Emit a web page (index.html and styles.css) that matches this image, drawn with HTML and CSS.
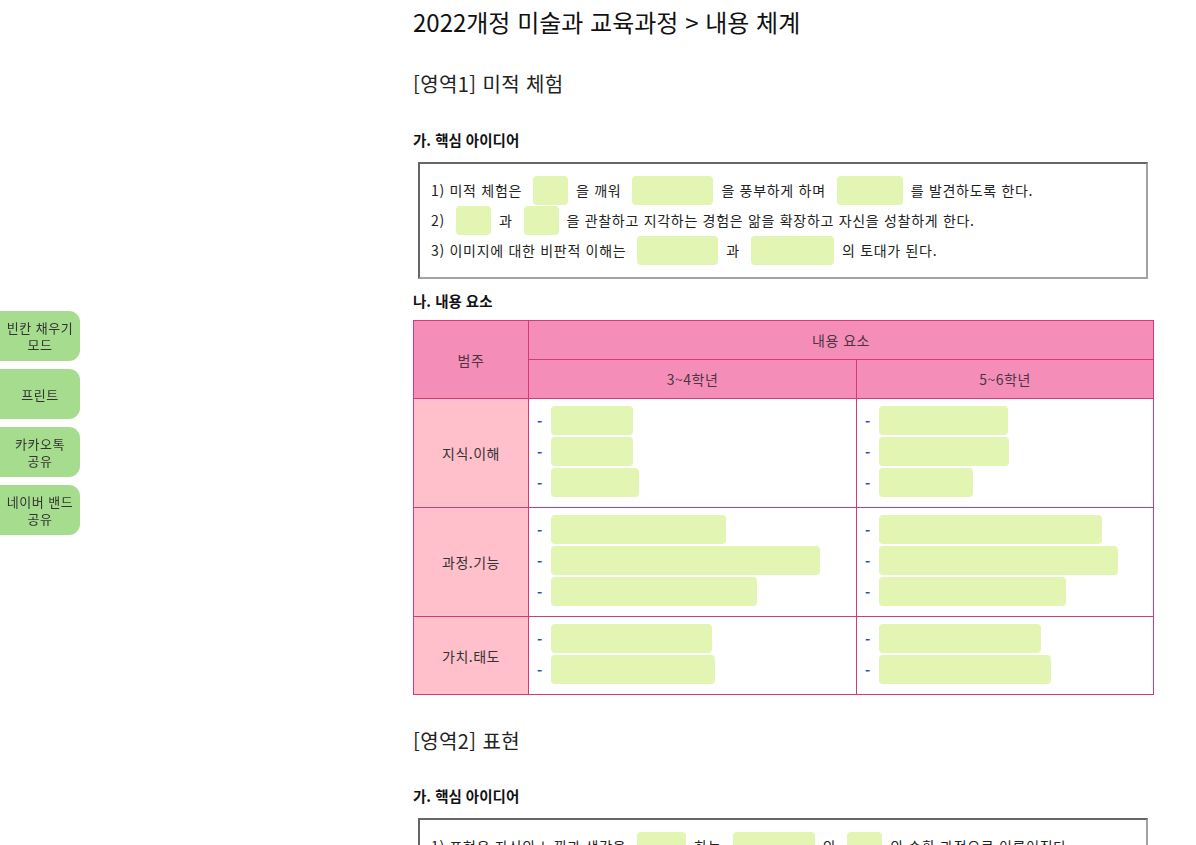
FILE: index.html
```html
<!DOCTYPE html>
<html lang="ko">
<head>
<meta charset="utf-8">
<title>2022개정 미술과 교육과정 > 내용 체계</title>
<link rel="stylesheet" href="styles.css">
</head>
<body>
<nav class="side">
  <button class="side-btn">빈칸 채우기<br>모드</button>
  <button class="side-btn">프린트</button>
  <button class="side-btn">카카오톡<br>공유</button>
  <button class="side-btn">네이버 밴드<br>공유</button>
</nav>
<main class="main">
  <h1 class="title">2022개정 미술과 교육과정 &gt; 내용 체계</h1>

  <h2 class="area">[영역1] 미적 체험</h2>
  <h3 class="sub">가. 핵심 아이디어</h3>
  <div class="idea">
    <div class="line">1) 미적 체험은<span class="blank w35"></span>을 깨워<span class="blank w81"></span>을 풍부하게 하며<span class="blank w66"></span>를 발견하도록 한다.</div>
    <div class="line">2)<span class="blank w35"></span>과<span class="blank w35"></span>을 관찰하고 지각하는 경험은 앎을 확장하고 자신을 성찰하게 한다.</div>
    <div class="line">3) 이미지에 대한 비판적 이해는<span class="blank w81"></span>과<span class="blank w83"></span>의 토대가 된다.</div>
  </div>

  <h3 class="sub sub2">나. 내용 요소</h3>
  <table class="tbl">
    <colgroup><col class="c1"><col class="c2"><col class="c3"></colgroup>
    <thead>
      <tr><th rowspan="2">범주</th><th colspan="2">내용 요소</th></tr>
      <tr><th>3~4학년</th><th>5~6학년</th></tr>
    </thead>
    <tbody>
      <tr>
        <td class="cat">지식.이해</td>
        <td class="cell">
          <div class="item"><span class="dash">-</span><span class="blank" style="width:82px"></span></div>
          <div class="item"><span class="dash">-</span><span class="blank" style="width:82px"></span></div>
          <div class="item"><span class="dash">-</span><span class="blank" style="width:88px"></span></div>
        </td>
        <td class="cell">
          <div class="item"><span class="dash">-</span><span class="blank" style="width:129px"></span></div>
          <div class="item"><span class="dash">-</span><span class="blank" style="width:130px"></span></div>
          <div class="item"><span class="dash">-</span><span class="blank" style="width:94px"></span></div>
        </td>
      </tr>
      <tr>
        <td class="cat">과정.기능</td>
        <td class="cell">
          <div class="item"><span class="dash">-</span><span class="blank" style="width:175px"></span></div>
          <div class="item"><span class="dash">-</span><span class="blank" style="width:269px"></span></div>
          <div class="item"><span class="dash">-</span><span class="blank" style="width:206px"></span></div>
        </td>
        <td class="cell">
          <div class="item"><span class="dash">-</span><span class="blank" style="width:223px"></span></div>
          <div class="item"><span class="dash">-</span><span class="blank" style="width:239px"></span></div>
          <div class="item"><span class="dash">-</span><span class="blank" style="width:187px"></span></div>
        </td>
      </tr>
      <tr>
        <td class="cat">가치.태도</td>
        <td class="cell">
          <div class="item"><span class="dash">-</span><span class="blank" style="width:161px"></span></div>
          <div class="item"><span class="dash">-</span><span class="blank" style="width:164px"></span></div>
        </td>
        <td class="cell">
          <div class="item"><span class="dash">-</span><span class="blank" style="width:162px"></span></div>
          <div class="item"><span class="dash">-</span><span class="blank" style="width:172px"></span></div>
        </td>
      </tr>
    </tbody>
  </table>

  <h2 class="area area2">[영역2] 표현</h2>
  <h3 class="sub sub3">가. 핵심 아이디어</h3>
  <div class="idea">
    <div class="line">1) 표현은 자신의 느낌과 생각을<span class="blank w49"></span>하는<span class="blank w82"></span>의<span class="blank w35"></span>의 순환 과정으로 이루어진다.</div>
    <div class="line">2) 표현은<span class="blank w81"></span>을 바탕으로<span class="blank w81"></span>과 소통하는 과정이다.</div>
    <div class="line">3)<span class="blank w66"></span>에 대한 탐색은 표현의 가능성을 확장한다.</div>
  </div>
</main>
</body>
</html>
```

FILE: styles.css
```css
html, body {
  margin: 0;
  padding: 0;
  background: #fff;
}
body {
  font-family: "Noto Sans CJK KR", "Noto Sans", "Liberation Sans", sans-serif;
  color: #222;
  font-size: 14px;
}
.side {
  position: fixed;
  left: 0;
  top: 311px;
  display: flex;
  flex-direction: column;
  gap: 8px;
}
.side-btn {
  width: 80px;
  height: 50px;
  border: 0;
  margin: 0;
  padding: 0 2px;
  background: #a6dc8e;
  border-radius: 0 11px 11px 0;
  font-family: inherit;
  font-size: 13px;
  letter-spacing: 0.5px;
  line-height: 17px;
  color: #333;
  text-align: center;
}
.main {
  margin-left: 413px;
  width: 740px;
}
.title {
  margin: 7px 0 0;
  font-size: 24px;
  line-height: 30px;
  font-weight: 400;
  color: #111;
}
.area {
  margin: 33px 0 0;
  font-size: 20px;
  letter-spacing: 0.4px;
  line-height: 28px;
  font-weight: 400;
  color: #222;
}
.area2 { margin-top: 32px; }
.sub {
  margin: 32px 0 0;
  font-size: 14.5px;
  line-height: 20px;
  font-weight: 700;
  color: #111;
}
.sub2 { margin-top: 12px; }
.sub3 { margin-top: 31px; }
.idea {
  margin: 12px 5px 0;
  border: 2px solid;
  border-color: #666 #a3a3a3 #a3a3a3 #666;
  padding: 11px 11px 12px;
}
.line {
  height: 30px;
  display: flex;
  align-items: center;
  white-space: pre;
  letter-spacing: 0.7px;
  color: #222;
}
.blank {
  display: inline-block;
  height: 29px;
  background: #e2f5b3;
  border-radius: 4px;
}
.line .blank {
  margin: 0 8px 0 11px;
}
.w35 { width: 35px; }
.w49 { width: 49px; }
.w66 { width: 66px; }
.w81 { width: 81px; }
.w82 { width: 82px; }
.w83 { width: 83px; }
.tbl {
  margin-top: 9px;
  width: 740px;
  border-collapse: collapse;
  table-layout: fixed;
}
.c1 { width: 115px; }
.c2 { width: 328px; }
.c3 { width: 297px; }
.tbl th, .tbl td {
  border: 1px solid #d4397a;
  padding: 0;
  letter-spacing: 0.5px;
}
.tbl th {
  height: 38px;
  background: #f48eb9;
  font-weight: 400;
  color: #4a3540;
  text-align: center;
}
.tbl td.cat {
  background: #ffc0cb;
  text-align: center;
  color: #333;
}
.tbl td.cell {
  padding: 7px 8px 8px;
  vertical-align: top;
}
.item {
  display: flex;
  align-items: flex-start;
  height: 31px;
}
.dash {
  width: 14px;
  line-height: 30px;
  color: #1f4fb0;
  font-weight: 700;
  letter-spacing: 0;
}
```
